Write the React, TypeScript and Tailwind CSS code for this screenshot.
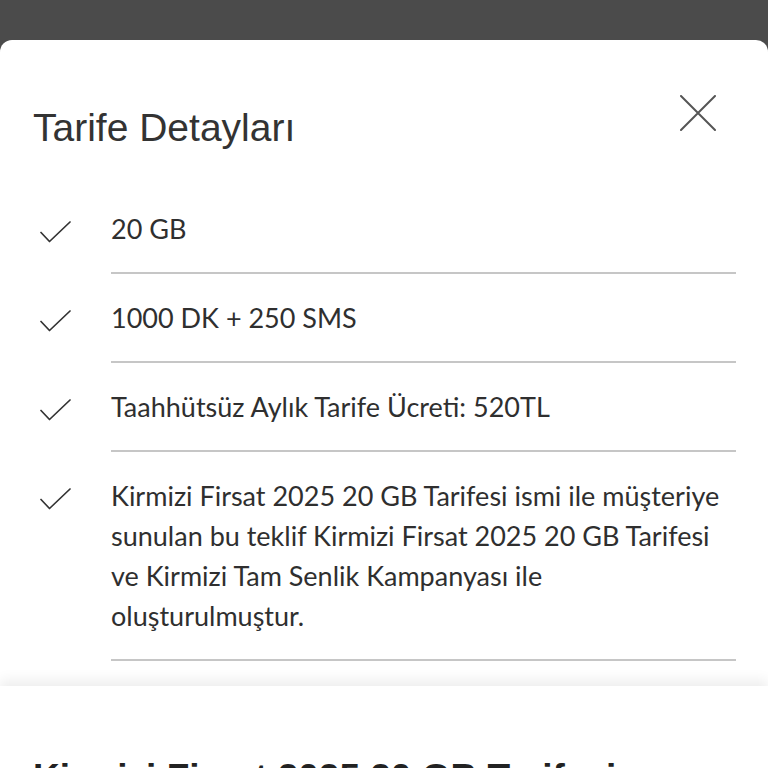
const items: string[] = [
  "20 GB",
  "1000 DK + 250 SMS",
  "Taahhütsüz Aylık Tarife Ücreti: 520TL",
  "Kirmizi Firsat 2025 20 GB Tarifesi ismi ile müşteriye sunulan bu teklif Kirmizi Firsat 2025 20 GB Tarifesi ve Kirmizi Tam Senlik Kampanyası ile oluşturulmuştur.",
]

function Check() {
  return (
    <svg width="32" height="24" viewBox="0 0 32 24" fill="none" className="shrink-0 mt-[12px]">
      <path d="M1 11.5 L9.5 20.5 L30 1" stroke="#333" strokeWidth="1.7" strokeLinecap="round" strokeLinejoin="round" />
    </svg>
  )
}

function Row({ text }: { text: string }) {
  return (
    <div className="flex shrink-0">
      <div className="w-[111px] pl-[40px] pt-[24px]">
        <Check />
      </div>
      <div className="flex-1 mr-[32px] border-b-2 border-[#c6c6c6] pt-[24px] pb-[23px]">
        <p className="font-['Lato',sans-serif] text-[27px] leading-[40px] text-[#2f2f2f]">
          {text}
        </p>
      </div>
    </div>
  )
}

export default function App() {
  return (
    <div className="w-[768px] h-[768px] overflow-hidden bg-[#4b4b4b] pt-[40px]">
      <div className="bg-white rounded-t-[12px] h-full flex flex-col">
        <div className="flex shrink-0 items-start justify-between pl-[33px] pr-[52px] pt-[54px] h-[145px]">
          <h1 className="font-['Liberation_Sans',Arial,sans-serif] text-[39px] leading-[44px] text-[#333] mt-[12px]">
            Tarife Detayları
          </h1>
          <button className="mt-[1px]">
            <svg width="36" height="36" viewBox="0 0 36 36" fill="none">
              <path d="M1 1 L35 35 M35 1 L1 35" stroke="#555" strokeWidth="2" strokeLinecap="round" />
            </svg>
          </button>
        </div>
        {items.map((t) => (
          <Row key={t} text={t} />
        ))}
        <div className="h-[25px] shrink-0" />
        <div className="flex-1 shrink-0 bg-white shadow-[0_-6px_12px_rgba(0,0,0,0.07)] pl-[33px] pt-[70px]">
          <h2 className="font-['Liberation_Sans',Arial,sans-serif] font-bold text-[37px] leading-[44px] text-[#222] whitespace-nowrap">
            Kirmizi Firsat 2025 20 GB Tarifesi
          </h2>
        </div>
      </div>
    </div>
  )
}
